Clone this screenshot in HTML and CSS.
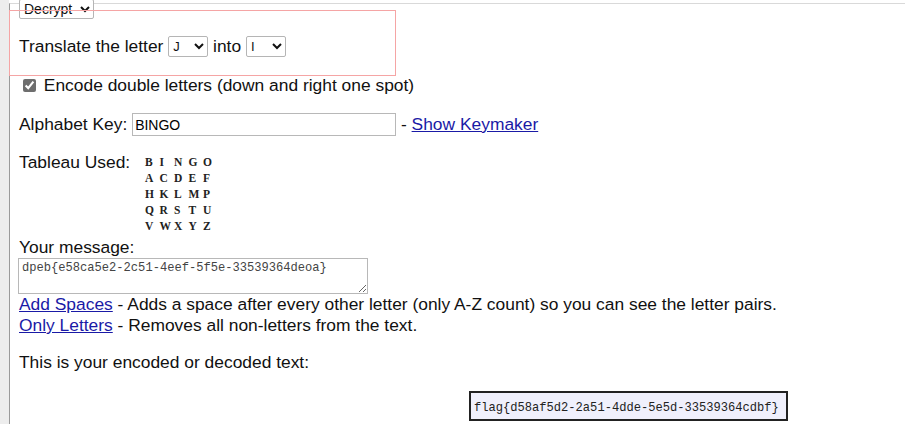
FILE: index.html
```html
<!DOCTYPE html>
<html lang="en">
<head>
    <meta charset="UTF-8">
    <title>Two-Square / Playfair Decoder</title>
    <link rel="stylesheet" href="styles.css">
</head>
<body>
    <div class="frame">
        <select class="mode-select">
            <option>Decrypt</option>
            <option>Encrypt</option>
        </select>
        <div class="translate-row">
            Translate the letter
            <select class="letter-select"><option>J</option></select>
            into
            <select class="letter-select"><option>I</option></select>
        </div>
        <div class="double-row">
            <input type="checkbox" class="double-check" checked> Encode double letters (down and right one spot)
        </div>
        <div class="key-row">
            Alphabet Key: <input type="text" class="key-input" value="BINGO"> - <a href="#">Show Keymaker</a>
        </div>
        <div class="tableau-row">
            <span class="tableau-label">Tableau Used:</span>
            <div class="tableau">
                <span>B</span><span>I</span><span>N</span><span>G</span><span>O</span>
                <span>A</span><span>C</span><span>D</span><span>E</span><span>F</span>
                <span>H</span><span>K</span><span>L</span><span>M</span><span>P</span>
                <span>Q</span><span>R</span><span>S</span><span>T</span><span>U</span>
                <span>V</span><span>W</span><span>X</span><span>Y</span><span>Z</span>
            </div>
        </div>
        <div class="message-label">Your message:</div>
        <textarea class="message">dpeb{e58ca5e2-2c51-4eef-5f5e-33539364deoa}</textarea>
        <div class="tool-line"><a href="#">Add Spaces</a> - Adds a space after every other letter (only A-Z count) so you can see the letter pairs.</div>
        <div class="tool-line"><a href="#">Only Letters</a> - Removes all non-letters from the text.</div>
        <p class="result-label">This is your encoded or decoded text:</p>
        <div class="result">flag{d58af5d2-2a51-4dde-5e5d-33539364cdbf}</div>
    </div>
</body>
</html>
```

FILE: styles.css
```css
body {
    margin: 0;
    font-family: "Liberation Sans", Arial, sans-serif;
    font-size: 17.4px;
    color: #111;
    background: linear-gradient(to right, #ededed 9px, #fff 9px);
}
a { color: #1a1aa6; }
.frame {
    margin: 3px 0 0 9px;
    padding-left: 9px;
    border-top: 1px solid #d9d9d9;
    border-left: 1px solid #9a9a9a;
    background: #fff;
    min-height: 430px;
    line-height: 21px;
}
.mode-select {
    display: block;
    margin-top: -5px;
    width: 75px;
    height: 20px;
    font-family: "Liberation Sans", Arial, sans-serif;
    font-size: 14px;
    border: 1px solid #b5b5b5;
    border-radius: 2px;
    background: #fff;
    color: #111;
}
.translate-row {
    position: relative;
    box-sizing: border-box;
    width: 387px;
    margin: -9px 0 0 -10px;
    padding: 26px 0 19px 10px;
}
/* highlight box drawn over the row */
.translate-row::after {
    content: "";
    position: absolute;
    inset: 0;
    border: 1px solid #f5a5a5;
    pointer-events: none;
}
.letter-select {
    width: 40px;
    height: 21px;
    font-family: "Liberation Sans", Arial, sans-serif;
    font-size: 13px;
    border: 1px solid #b5b5b5;
    border-radius: 2px;
    background: #fff;
    color: #111;
    vertical-align: 1px;
}
.double-row { line-height: 19px; }
.double-check {
    width: 13px;
    height: 13px;
    margin: 3px 3px 3px 4px;
    vertical-align: -1px;
    accent-color: #6e6e6e;
}
.key-row {
    margin-top: 18px;
    line-height: 23px;
}
.key-input {
    box-sizing: border-box;
    width: 264px;
    height: 23px;
    padding: 1px 2px;
    font-family: "Liberation Sans", Arial, sans-serif;
    font-size: 14px;
    border: 1px solid #b8b8b8;
    vertical-align: top;
}
.tableau-row {
    display: flex;
    margin-top: 18px;
    line-height: 16px;
}
.tableau-label { width: 126px; }
.tableau {
    display: grid;
    grid-template-columns: repeat(5, 14.5px);
    grid-auto-rows: 16px;
    font-family: "Liberation Serif", "Times New Roman", serif;
    font-weight: bold;
    font-size: 11.5px;
    color: #222;
}
.message-label { margin-top: 3px; }
.message {
    display: block;
    box-sizing: border-box;
    width: 350px;
    height: 36px;
    margin: 0 0 0 -1px;
    padding: 2px 3px;
    font-family: "Liberation Mono", "Courier New", monospace;
    font-size: 12.1px;
    line-height: 15px;
    color: #444;
    border: 1px solid #b8b8b8;
}
.result-label { margin: 16px 0 0; }
.result {
    width: fit-content;
    margin: 18px 0 0 450px;
    padding: 8px 7px 4px 3px;
    border: 2px solid #222;
    background: #f0f0fc;
    font-family: "Liberation Mono", "Courier New", monospace;
    font-size: 12.1px;
    line-height: 14px;
    color: #222;
}
```
